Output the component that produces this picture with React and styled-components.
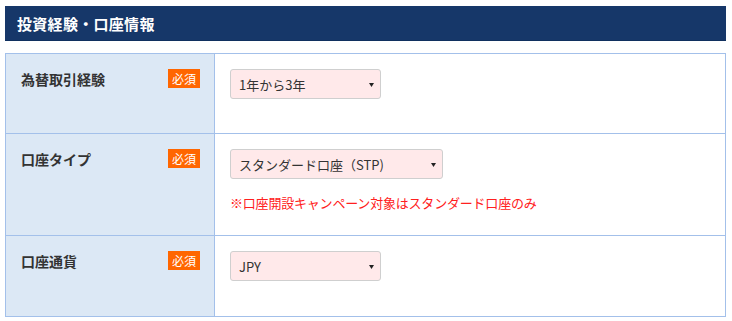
import React from "react";
import styled, { createGlobalStyle } from "styled-components";

const Global = createGlobalStyle`
  html, body { margin: 0; padding: 0; background: #fff; }
  body { font-family: "Noto Sans CJK JP", "Noto Sans", sans-serif; color: #333; }
  * { box-sizing: border-box; }
`;

const Page = styled.div`
  padding: 6px 6px 0 5px;
`;

const Heading = styled.h2`
  margin: 0;
  height: 35px;
  display: flex;
  align-items: center;
  padding-left: 12px;
  background: #163769;
  border-bottom: 1px solid #10305f;
  color: #fff;
  font-size: 15px;
  font-weight: 700;
  letter-spacing: 0.3px;
`;

const Table = styled.div`
  margin-top: 12px;
  display: grid;
  grid-template-columns: 209px 1fr;
  border: 1px solid #a3c0ea;
`;

const LabelCell = styled.div`
  display: flex;
  justify-content: space-between;
  align-items: flex-start;
  padding: 15px 14px 15px 15px;
  min-height: 80px;
  background: #dce8f5;
  border-right: 1px solid #a3c0ea;
  border-bottom: ${(p) => (p.$last ? "none" : "1px solid #a3c0ea")};
`;

const FieldCell = styled.div`
  padding: 15px 15px 22px 15px;
  min-height: 80px;
  border-bottom: ${(p) => (p.$last ? "none" : "1px solid #a3c0ea")};
`;

const Label = styled.span`
  font-size: 14px;
  line-height: 20px;
  font-weight: 700;
  color: #333;
`;

const Badge = styled.span`
  display: inline-block;
  width: 32px;
  height: 19px;
  line-height: 19px;
  text-align: center;
  background: #ff6600;
  color: #fff;
  font-size: 12px;
`;

const SelectBox = styled.div`
  position: relative;
  width: ${(p) => p.$w}px;
  height: 30px;
  display: flex;
  align-items: center;
  padding-left: 8px;
  background: #ffe9ea;
  border: 1px solid #cfcfcf;
  border-radius: 3px;
  font-size: 13px;
  color: #333;
`;

const Arrow = styled.svg`
  position: absolute;
  right: 6px;
  top: 13px;
`;

const Note = styled.div`
  margin-top: 13px;
  font-size: 13px;
  line-height: 21px;
  letter-spacing: -0.2px;
  color: #ff2020;
`;

const Select = ({ value, width }) => (
  <SelectBox $w={width}>
    {value}
    <Arrow width="5" height="4" viewBox="0 0 5 4">
      <path d="M0 0 H5 L2.5 4 Z" fill="#222" />
    </Arrow>
  </SelectBox>
);

const rows = [
  { label: "為替取引経験", value: "1年から3年", width: 151 },
  {
    label: "口座タイプ",
    value: "スタンダード口座（STP)",
    width: 213,
    note: "※口座開設キャンペーン対象はスタンダード口座のみ",
  },
  { label: "口座通貨", value: "JPY", width: 151 },
];

export default function App() {
  return (
    <Page>
      <Global />
      <Heading>投資経験・口座情報</Heading>
      <Table>
        {rows.map((r, i) => {
          const last = i === rows.length - 1;
          return (
            <React.Fragment key={r.label}>
              <LabelCell $last={last}>
                <Label>{r.label}</Label>
                <Badge>必須</Badge>
              </LabelCell>
              <FieldCell $last={last}>
                <Select value={r.value} width={r.width} />
                {r.note && <Note>{r.note}</Note>}
              </FieldCell>
            </React.Fragment>
          );
        })}
      </Table>
    </Page>
  );
}
